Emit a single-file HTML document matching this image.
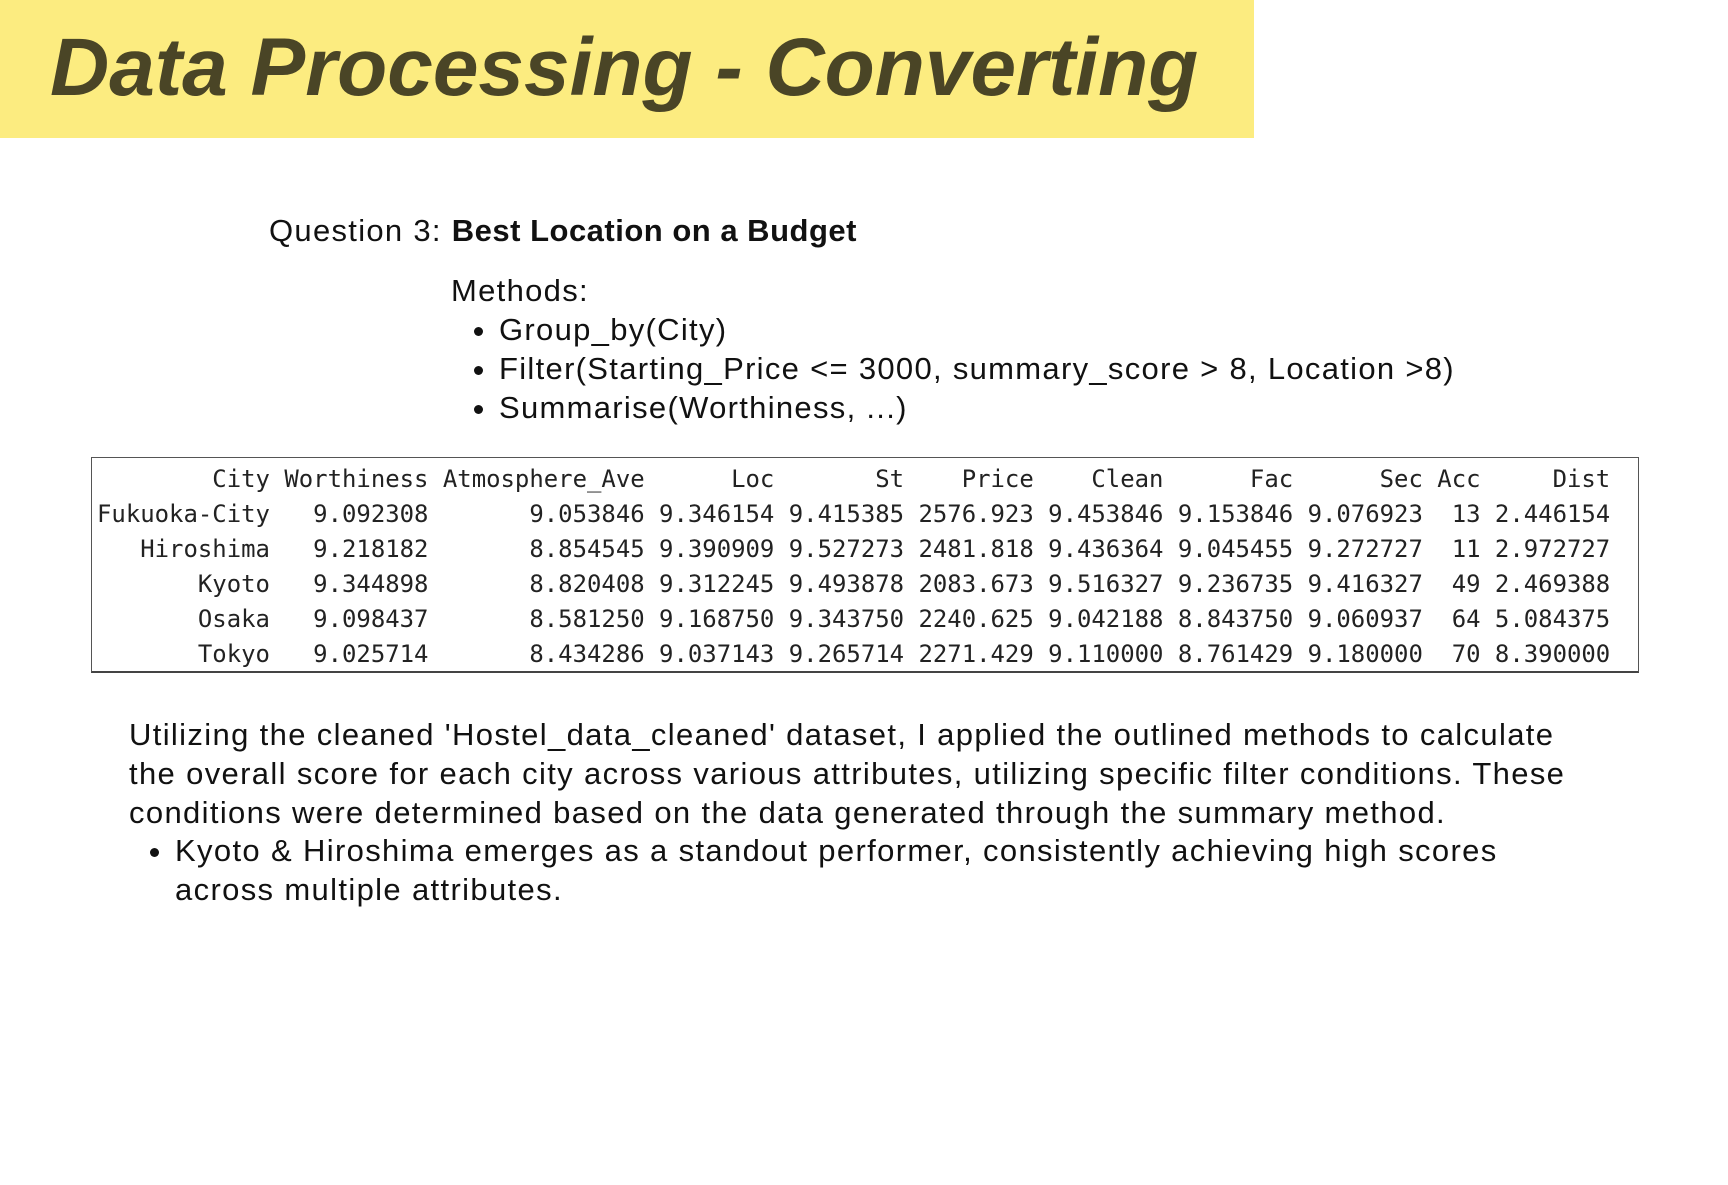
<!DOCTYPE html>
<html><head><meta charset="utf-8"><style>
html,body{margin:0;padding:0;background:#fff;}
body{width:1728px;height:1185px;position:relative;overflow:hidden;font-family:"Liberation Sans",sans-serif;color:#111;}
.band{position:absolute;left:0;top:0;width:1254px;height:138px;background:#fcec80;}
.title{position:absolute;left:50px;top:19px;font-size:82px;font-weight:bold;font-style:italic;color:#4a4526;white-space:nowrap;line-height:1.2;}
.q{position:absolute;left:269px;top:213px;font-size:31px;letter-spacing:1.3px;white-space:nowrap;}
.q b{letter-spacing:0.5px;}
.m{position:absolute;left:451px;top:271px;font-size:31px;letter-spacing:1.3px;line-height:39px;white-space:nowrap;}
.m ul{margin:0;padding-left:48px;}
.tbl{position:absolute;left:91px;top:457px;width:1548px;height:216px;border:1px solid #555;border-bottom:2px solid #444;box-sizing:border-box;}
.tbl pre{margin:0;position:absolute;left:5px;top:4px;font-family:"DejaVu Sans Mono","Liberation Mono",monospace;font-size:23.95px;line-height:35px;color:#222;}
.p{position:absolute;left:129px;top:716px;width:1580px;font-size:31px;letter-spacing:1.35px;line-height:38.8px;}
.p ul{margin:0;padding-left:46px;}
</style></head><body>
<div class="band"></div>
<div class="title">Data Processing - Converting</div>
<div class="q">Question 3: <b>Best Location on a Budget</b></div>
<div class="m">Methods:
<ul><li>Group_by(City)</li><li>Filter(Starting_Price &lt;= 3000, summary_score &gt; 8, Location &gt;8)</li><li>Summarise(Worthiness, ...)</li></ul></div>
<div class="tbl"><pre>        City Worthiness Atmosphere_Ave      Loc       St    Price    Clean      Fac      Sec Acc     Dist
Fukuoka-City   9.092308       9.053846 9.346154 9.415385 2576.923 9.453846 9.153846 9.076923  13 2.446154
   Hiroshima   9.218182       8.854545 9.390909 9.527273 2481.818 9.436364 9.045455 9.272727  11 2.972727
       Kyoto   9.344898       8.820408 9.312245 9.493878 2083.673 9.516327 9.236735 9.416327  49 2.469388
       Osaka   9.098437       8.581250 9.168750 9.343750 2240.625 9.042188 8.843750 9.060937  64 5.084375
       Tokyo   9.025714       8.434286 9.037143 9.265714 2271.429 9.110000 8.761429 9.180000  70 8.390000</pre></div>
<div class="p">Utilizing the cleaned 'Hostel_data_cleaned' dataset, I applied the outlined methods to calculate<br>the overall score for each city across various attributes, utilizing specific filter conditions. These<br>conditions were determined based on the data generated through the summary method.
<ul><li>Kyoto &amp; Hiroshima emerges as a standout performer, consistently achieving high scores<br>across multiple attributes.</li></ul></div>
</body></html>
